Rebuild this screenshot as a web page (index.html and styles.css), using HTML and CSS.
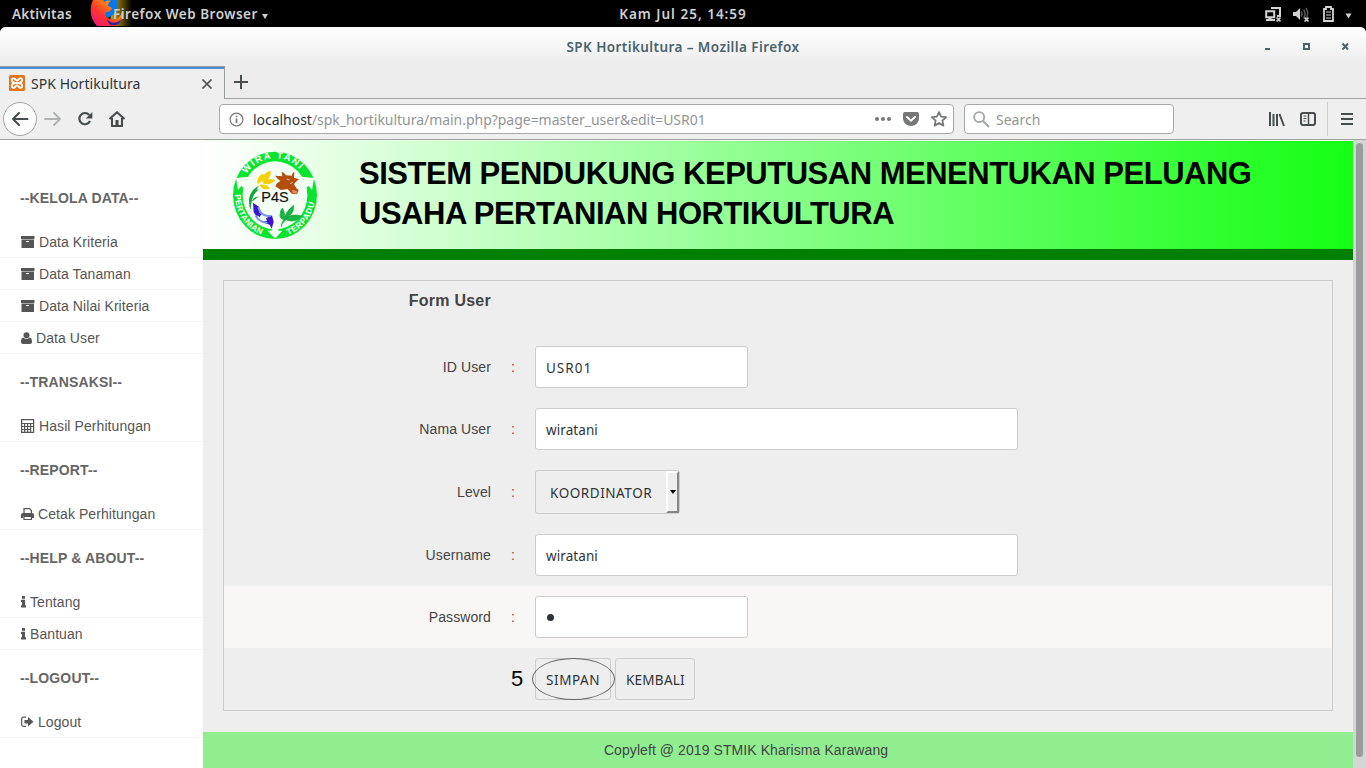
FILE: index.html
```html
<!DOCTYPE html>
<html lang="id">
<head>
<meta charset="utf-8">
<title>SPK Hortikultura</title>
<link rel="stylesheet" href="styles.css">
</head>
<body>
<svg width="0" height="0" class="defs">
  <symbol id="archive" viewBox="0 0 14 12"><path fill="currentColor" d="M0 0h13.500v3H0zM.5 3.500H13V12H.5zM5.200 5v1h3V5z" fill-rule="evenodd"/></symbol>
  <symbol id="info" viewBox="0 0 5 12"><path fill="currentColor" d="M1 0h3v2.800H1zM0 3.800h4v5.400h1v2.300H0V9.200h1V6H0z"/></symbol>
</svg>
<div class="topbar">
  <span class="activities">Aktivitas</span>
  <svg class="fox" width="44" height="27" viewBox="0 0 44 27">
    <defs>
      <linearGradient id="fx" x1="0" y1="1" x2="1" y2="0"><stop offset="0" stop-color="#e3108a"/><stop offset=".35" stop-color="#ff3035"/><stop offset=".7" stop-color="#ff8a0a"/><stop offset="1" stop-color="#ffb52a"/></linearGradient>
      <linearGradient id="fy" x1="0" x2="1"><stop offset="0" stop-color="#c8a018"/><stop offset=".4" stop-color="#7d6608"/><stop offset="1" stop-color="#000"/></linearGradient>
    </defs>
    <path d="M22 0h20v26H20z" fill="url(#fy)"/>
    <path d="M12 0h15q2 6 0 12l-9 6-8-7z" fill="#0878e8"/>
    <path d="M3 0C-1 9 0 19 7 26h18c6-3 8-8 7-14-2 6-7 9-12 7-4-1-6-4-4-7 3 0 5-1 6-4l-4-2c0-3 1-4 3-5-3-1-5 0-7 1-1-1-1-3-1-4z" fill="url(#fx)"/>
    <path d="M17 19c4 5 10 5 14 0-1 5-4 7-8 6-4 0-5-2-6-6z" fill="#37209a"/>
  </svg>
  <span class="appname">Firefox Web Browser</span><i class="tri app-tri"></i>
  <span class="clock">Kam Jul 25, 14:59</span>
  <svg class="tray" width="90" height="18" viewBox="0 0 90 18" fill="none" stroke="#d3d3d3">
    <path d="M1.200 5.200h8v6h-8z" stroke-width="2"/><path d="M6 2h9v8h-3M1 14h9" stroke-width="2"/><path d="M5 12v2" stroke-width="3"/><path d="M11.500 11.500l4 4m0-4l-4 4" stroke-width="1.700"/>
    <path d="M28 6h3l4-4v12l-4-4h-3z" fill="#d3d3d3" stroke="none"/><path d="M36 5.500q2 2.500 0 5M38.500 3.500q3 4 0 9M41 2q3.500 5.500 0 10" stroke="#555" stroke-width="1.500"/><path d="M39.500 11.500l4 4m0-4l-4 4" stroke-width="1.700"/>
    <path d="M59 3h2V1h5v2h2v12H59z" stroke-width="1.800"/><path d="M61 6h5M61 9h5M61 12h5" stroke-width="1.200"/>
    <path d="M80.500 7.500h6l-3 5z" fill="#d3d3d3" stroke="none"/>
  </svg>
</div>
<div class="window">
  <div class="titlebar"><span>SPK Hortikultura – Mozilla Firefox</span>
    <svg class="wm" width="86" height="12" viewBox="0 0 86 12" fill="none" stroke="#4b636d"><path d="M1 9h5" stroke-width="2"/><path d="M40 4h5v5h-5z" stroke-width="2"/><path d="M78.500 3.500l5.500 6m0-6l-5.500 6" stroke-width="2"/></svg>
  </div>
  <div class="tabs">
    <div class="tab">
      <svg class="favicon" width="16" height="16" viewBox="0 0 16 16"><rect width="16" height="16" rx="1.500" fill="#e8731d"/><path d="M5.800 8C1.500 7 2.500 2.800 4.800 3.200 6.500 3.200 6 5.500 8 5.500s1.500-2.300 3.200-2.300C13.500 2.800 14.500 7 10.200 8c4.300 1 3.300 5.200 1 4.800-1.700 0-1.200-2.300-3.200-2.300s-1.500 2.300-3.200 2.300C2.500 13.200 1.500 9 5.800 8zM6 8h4" fill="none" stroke="#fff" stroke-width="1.900"/></svg>
      <span>SPK Hortikultura</span>
      <svg class="close" width="12" height="12" viewBox="0 0 12 12"><path d="M1.500 1.500l9 9m0-9l-9 9" stroke="#4a4f50" stroke-width="1.700"/></svg>
    </div>
    <div class="tabfill"><svg width="16" height="16" viewBox="0 0 16 16"><path d="M1 8h14M8 1v14" stroke="#4a4f50" stroke-width="2"/></svg></div>
  </div>
  <div class="toolbar">
    <div class="back"><svg width="18" height="16" viewBox="0 0 18 16" fill="none" stroke="#474d4e" stroke-width="2"><path d="M16.500 8H2M8 2L2 8l6 6" stroke-linecap="round" stroke-linejoin="round"/></svg></div>
    <svg class="fwd" width="18" height="16" viewBox="0 0 18 16" fill="none" stroke="#b0b2b2" stroke-width="1.900"><path d="M1 8h15M10 2l6 6-6 6" stroke-linecap="round" stroke-linejoin="round"/></svg>
    <svg class="reload" width="16" height="16" viewBox="0 0 16 16"><path d="M12.200 4A5.600 5.600 0 1 0 13 10" fill="none" stroke="#474d4e" stroke-width="2.200"/><path d="M15.300 1v6.500H8.800z" fill="#474d4e"/></svg>
    <svg class="home" width="18" height="16" viewBox="0 0 18 16"><path d="M1.500 8L9 1.200 16.500 8M4 7v8h10V7" fill="none" stroke="#474d4e" stroke-width="2.100" stroke-linejoin="round"/><path d="M7.500 9h3v6h-3z" fill="#474d4e"/></svg>
    <div class="url">
      <svg width="15" height="15" viewBox="0 0 15 15"><circle cx="7.500" cy="7.500" r="6.400" fill="none" stroke="#747a7a" stroke-width="1.200"/><path d="M7.500 6.500v4.500M7.500 3.700v1.600" stroke="#747a7a" stroke-width="1.700"/></svg>
      <span class="address"><b>localhost</b>/spk_hortikultura/main.php?page=master_user&amp;edit=USR01</span>
      <svg class="urlicons" width="74" height="18" viewBox="0 0 74 18" fill="#747878"><circle cx="3" cy="9" r="2"/><circle cx="9" cy="9" r="2"/><circle cx="15" cy="9" r="2"/><path d="M31 2h12q2 0 2 2v4c0 4-3 8-8 8s-8-4-8-8V4q0-2 2-2z"/><path d="M33 7l4 3.700L41 7" fill="none" stroke="#fff" stroke-width="2" stroke-linecap="round"/><path d="M65 2l2.100 4.700 5 .5-3.700 3.400 1 5-4.400-2.500-4.400 2.500 1-5-3.700-3.400 5-.5z" fill="none" stroke="#747878" stroke-width="1.800" stroke-linejoin="round"/></svg>
    </div>
    <div class="search"><svg width="17" height="17" viewBox="0 0 17 17"><circle cx="6.200" cy="6.200" r="5" fill="none" stroke="#a0a3a3" stroke-width="1.800"/><path d="M10 10l6 6" stroke="#a0a3a3" stroke-width="2"/></svg><span>Search</span></div>
    <svg class="tools" width="98" height="36" viewBox="0 0 98 36" fill="none" stroke="#474d4e"><path d="M8 11v14M11.500 13v12M15 13v12M17.500 13l4.500 12" stroke-width="2"/><rect x="39" y="12" width="14" height="12" rx="2" stroke-width="2"/><path d="M46.500 12v12" stroke-width="1.500"/><path d="M41.500 15h3M41.500 17.500h3M41.500 20h2" stroke-width="1"/><path d="M65.500 1v34" stroke="#cfcfcf"/><path d="M79 13h12M79 18h12M79 23h12" stroke-width="2"/></svg>
  </div>
</div>
<div class="page">
  <nav class="side">
    <h4>--KELOLA DATA--</h4>
    <a><svg width="14" height="12"><use href="#archive"/></svg>Data Kriteria</a>
    <a><svg width="14" height="12"><use href="#archive"/></svg>Data Tanaman</a>
    <a><svg width="14" height="12"><use href="#archive"/></svg>Data Nilai Kriteria</a>
    <a><svg width="11" height="12" viewBox="0 0 11 12" fill="currentColor"><circle cx="5.500" cy="3.200" r="3"/><path d="M2.200 5.500C.5 5.800 0 8 0 10q0 2 2 2h7q2 0 2-2c0-2-.5-4.200-2.200-4.500-1.800 1.700-4.800 1.700-6.600 0z"/></svg>Data User</a>
    <h4>--TRANSAKSI--</h4>
    <a><svg width="14" height="14" viewBox="0 0 14 14" fill="none" stroke="currentColor"><path d="M.6.6h12v12.800H.6zM.6 4.500h12M.6 7.500h12M.6 10.500h9M3.600 4.500v9M6.600 4.500v9M9.600 4.500v9" stroke-width="1.200"/></svg>Hasil Perhitungan</a>
    <h4>--REPORT--</h4>
    <a><svg width="13" height="12" viewBox="0 0 13 12"><path d="M3 6V.6h5.500L10.400 2.500V6M3 8.500h7.400v3H3z" fill="none" stroke="currentColor" stroke-width="1.200"/><path d="M0 7q0-2 2-2h9q2 0 2 2v3h-2.200V8H2.200v2H0z" fill="currentColor"/></svg>Cetak Perhitungan</a>
    <h4>--HELP &amp; ABOUT--</h4>
    <a><svg width="5" height="12"><use href="#info"/></svg>Tentang</a>
    <a><svg width="5" height="12"><use href="#info"/></svg>Bantuan</a>
    <h4>--LOGOUT--</h4>
    <a><svg width="13" height="12" viewBox="0 0 13 12"><path d="M5 1.200H2.500Q.7 1.200.7 3v5.500q0 1.800 1.800 1.800H5" fill="none" stroke="currentColor" stroke-width="1.200"/><path d="M3.500 4H7V1l5.500 4.800L7 10.500v-3H3.500z" fill="currentColor"/></svg>Logout</a>
  </nav>
  <main>
    <header class="banner">
      <svg class="logo" width="100" height="100" viewBox="0 0 300 300">
        <defs><path id="top" d="M59 95.500A105 111 0 0 1 241 95.500"/><path id="left" d="M30 146A120 125 0 0 0 131 274"/><path id="right" d="M184 271A120 125 0 0 0 270 146"/></defs>
        <ellipse cx="150" cy="151" rx="126" ry="131" fill="#0be331"/>
        <ellipse cx="150" cy="151" rx="97" ry="102" fill="#f4fff4"/>
        <path fill="#f4fff4" d="M33 99l39-4-10 10 12 10-12 18-13-10-10 12zM267 99l-39-4 10 10-12 10 12 18 13-10 10 12zM150 281l-22-24h12v-16h20v16h12z"/>
        <g class="ringtext">
          <text letter-spacing="5" font-size="28"><textPath href="#top" startOffset="10">WIRA TANI</textPath></text>
          <text letter-spacing="1" font-size="25"><textPath href="#left" startOffset="3">PERTANIAN</textPath></text>
          <text letter-spacing="2" font-size="25"><textPath href="#right" startOffset="5">TERPADU</textPath></text>
        </g>
        <path d="M77 194C65 164 75 135 102 122 84 148 78 168 77 194z" fill="#17a83b"/><path d="M79 158l7-21 16-6zM78 172l9-14 15-4z" fill="#17a83b"/>
        <path d="M98 117c-4-19 7-28 17-31 5 12-2 24-17 31zM112 111c0-22 12-31 25-34 2 17-7 29-25 34zM112 114c14-15 27-14 39-8-12 13-26 15-39 8zM103 119c16-3 28 3 32 12-15 4-26 0-32-12z" fill="#f7cf0a"/>
        <path d="M150 92l22 2-2-14q9 4 13 11l17 1q2-9 8-12l-1 18 15 5-10 8-5 7 7 11 7 7-5 12-16-2-12-14-20 3-17-11 5-9 10-7-8-7z" fill="#b44e0a"/><path d="M202 134l14 4-1 8-13-3z" fill="#e28a75"/><path d="M185 102l9 3M195 116l8-4" stroke="#fff" stroke-width="2"/>
        <path d="M84 174l18 11 1 17-7 14-10-14zM112 205l-9 12-12-16zM123 220l18-9 5 20-6 20-6-12-24-9 16-2z" fill="#3e12cf"/><path d="M100 187q8 30 37 25M92 211q8 19 35 23" fill="none" stroke="#6e99ec" stroke-width="6"/>
        <path d="M172 236q8-36 34-55 2 28-27 41 22-18 50-9-18 22-45 12M170 222q-10-17 2-33 12 20 2 34-13-11-12-12M175 228q-8 11-5 18" fill="#17b644" stroke="#149b37" stroke-width="2"/>
        <text class="p4s" x="109" y="171" textLength="82" lengthAdjust="spacingAndGlyphs">P4S</text>
      </svg>
      <h1>SISTEM PENDUKUNG KEPUTUSAN MENENTUKAN PELUANG<br>USAHA PERTANIAN HORTIKULTURA</h1>
    </header>
    <form class="form">
      <h2>Form User</h2>
      <div class="row"><label>ID User</label><i>:</i><div class="input short id">USR01</div></div>
      <div class="row"><label>Nama User</label><i>:</i><div class="input">wiratani</div></div>
      <div class="row level"><label>Level</label><i>:</i><div class="select"><span>KOORDINATOR</span><em></em></div></div>
      <div class="row"><label>Username</label><i>:</i><div class="input">wiratani</div></div>
      <div class="row light"><label>Password</label><i>:</i><div class="input short"><u></u></div></div>
      <div class="row actions"><span class="step">5</span><div class="btn simpan"><span>SIMPAN</span></div><div class="btn kembali"><span>KEMBALI</span></div></div>
    </form>
    <footer>Copyleft @ 2019 STMIK Kharisma Karawang</footer>
  </main>
  <div class="scroll"><div></div></div>
</div>
</body>
</html>
```
FILE: styles.css
```css
*, *::after { box-sizing: border-box; }
body { margin: 0; width: 1366px; height: 768px; overflow: hidden; background: #000; font-family: "Noto Sans", sans-serif; font-size: 14px; }
svg { display: block; flex: none; }
.defs { position: absolute; }
.topbar { position: relative; height: 27px; display: flex; align-items: center; color: #d0d0d0; font-size: 13.5px; font-weight: 600; line-height: 27px; padding-top: 1px; white-space: nowrap; letter-spacing: .5px; }
.activities { margin-left: 12px; width: 78px; letter-spacing: .25px; }
.fox { position: absolute; left: 90px; top: 0; }
.appname { position: relative; margin-left: 23px; }
.tri { border: 3.500px solid transparent; border-top: 5px solid #d0d0d0; border-bottom: 0; margin: 4px 0 0 4px; }
.clock { position: absolute; left: 0; right: 0; text-align: center; letter-spacing: 1px; }
.tray { position: absolute; left: 1265px; top: 6px; }
.window { background: #ededed; height: 113px; border-radius: 6px 6px 0 0; overflow: hidden; }
.titlebar { position: relative; height: 39px; background: linear-gradient(#fff, #ededed 95%); text-align: center; line-height: 40px; font-size: 13.5px; font-weight: 600; color: #4b636d; letter-spacing: .42px; }
.wm { position: absolute; left: 1264px; top: 13px; }
.tabs { display: flex; height: 33px; }
.tab { width: 225px; border-top: 1px solid #999c9c; border-right: 1px solid #999c9c; display: flex; align-items: center; padding: 0 11px 0 9px; box-shadow: inset 0 2px #4a90d9; background: #efefef; color: #2e3436; }
.tab span { margin-left: 6px; flex: 1; line-height: 32px; white-space: nowrap; padding-top: 2px; letter-spacing: .05px; }
.close { margin-top: 1px; }
.tabfill { flex: 1; border-bottom: 1px solid #a1a3a2; padding: 8px; }
.toolbar { height: 41px; display: flex; align-items: center; padding-left: 3px; background: #efefef; border-bottom: 1px solid #a0a29f; }
.back { width: 34px; height: 34px; border: 1px solid #a3a5a5; border-radius: 50%; background: #fcfcfc; display: grid; place-items: center; }
.fwd { margin-left: 7px; }
.reload { margin-left: 15px; }
.home { margin-left: 15px; }
.url, .search { height: 30px; border: 1px solid #a6a8a7; border-radius: 4px; background: #fff; display: flex; align-items: center; white-space: nowrap; }
.url { margin-left: 93px; width: 735px; padding: 0 5px 0 9px; }
.address { margin-left: 9px; flex: 1; color: #929595; padding-top: 1px; letter-spacing: -.03px; }
.address b { color: #2e3436; font-weight: 400; }
.search { margin-left: 10px; width: 210px; padding-left: 8px; color: #929595; }
.search span { margin-left: 6px; padding-top: 1px; }
.tools { margin-left: 88px; }
.page { display: flex; height: 628px; background: #eee; font-family: "Liberation Sans", Arial, sans-serif; font-size: 14px; color: #444; letter-spacing: .08px; }
.side { width: 203px; background: #fff; padding-top: 30px; border-right: 1px solid #fafafa; color: #555; }
.side h4 { margin: 0; height: 56px; line-height: 56px; font-size: 14px; padding-left: 20px; color: #666; letter-spacing: .14px; }
.side a { display: flex; align-items: center; gap: 4px; height: 32px; border-bottom: 1px solid #f4f4f4; padding-left: 21px; padding-top: 1px; }
main { width: 1150px; display: flex; flex-direction: column; }
.banner { height: 120px; border-top: 1px solid #e8ffe8; border-bottom: 11px solid #008000; background: linear-gradient(90deg, #fff, #14ff14); display: flex; padding: 4px 0 0 22px; }
.logo { overflow: hidden; letter-spacing: 0; }
.ringtext { font-family: "Liberation Sans", Arial, sans-serif; font-weight: 700; fill: #fff; }
.p4s { font-family: "Liberation Sans", Arial, sans-serif; font-size: 46px; fill: #111; stroke: #111; stroke-width: .6px; }
.banner h1 { margin: 9px 0 0 34px; font-size: 31px; line-height: 40px; color: #000; white-space: nowrap; letter-spacing: -.49px; }
.form { margin: 20px 20px 0; height: 431px; border: 1px solid #ccc; }
.form h2 { margin: 0; height: 55px; width: 267px; text-align: right; font-size: 16px; line-height: 40px; color: #444; letter-spacing: .25px; }
.row { display: flex; height: 62px; align-items: center; }
.level { height: 64px; }
.light { background: #f8f7f6; }
.row label { width: 267px; text-align: right; letter-spacing: .1px; }
.row i { width: 44px; text-align: center; font-style: normal; color: #944; }
.input { width: 483px; height: 42px; background: #fff; border: 1px solid #ccc; border-radius: 3px; padding: 0 10px; line-height: 42px; font-family: "Noto Sans", sans-serif; font-size: 13.5px; color: #2e3436; }
.input.short { width: 213px; }
.input.id { letter-spacing: 1px; }
.input u { display: block; width: 7px; height: 7px; border-radius: 50%; background: #2e3436; margin: 17px 0 0 1px; }
.select { width: 145px; height: 44px; border: 1px solid #ccc; border-radius: 3px; display: flex; font-family: "Noto Sans", sans-serif; line-height: 44px; color: #2e3436; font-size: 13.5px; letter-spacing: .55px; }
.select span { width: 130px; padding-left: 14px; }
.select em { width: 13px; border: 2px solid #888; border-left-color: #fff; border-top-color: #fff; display: grid; place-items: center; }
.select em::after { content: ""; border: 3.500px solid transparent; border-top: 4px solid #000; border-bottom: 0; }
.step { width: 311px; padding-left: 287px; font-size: 22px; color: #000; line-height: 40px; }
.btn { position: relative; height: 42px; width: 76px; border: 1px solid #ccc; border-radius: 3px; padding-left: 10px; line-height: 42px; white-space: nowrap; font-family: "Noto Sans", sans-serif; font-size: 13.5px; color: #2e3436; letter-spacing: .6px; }
.kembali { width: 80px; margin-left: 4px; letter-spacing: .25px; }
.simpan::after { content: ""; position: absolute; left: -4px; top: -1px; width: 83px; height: 42px; border: 1px solid #666; border-radius: 50%; }
footer { margin-top: 21px; height: 36px; background: #90ee90; text-align: center; line-height: 36px; padding-right: 64px; }
.scroll { width: 13px; background: #d4d5d5; padding: 3px 3px; }
.scroll div { width: 7px; height: 614px; border-radius: 4px; background: #9a9b9c; }
```
